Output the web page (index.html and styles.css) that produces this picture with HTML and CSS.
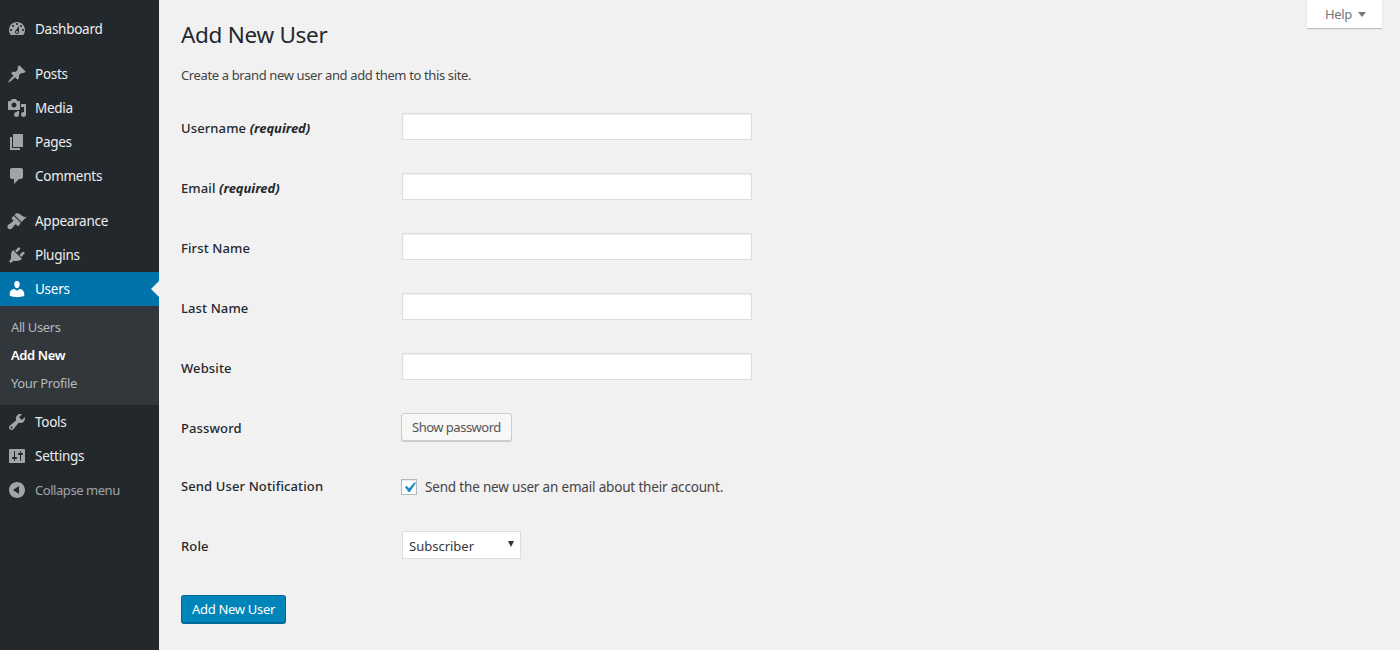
FILE: index.html
```html
<!DOCTYPE html>
<html lang="en">
<head>
<meta charset="utf-8">
<title>Add New User</title>
<link rel="stylesheet" href="styles.css">
</head>
<body>
<div class="app">
<nav class="sidebar">
  <ul class="menu group-first">
    <li class="item"><svg class="icon" viewBox="0 0 20 20"><path d="M3.76 16h12.48c1.1-1.37 1.76-3.11 1.76-5 0-4.42-3.58-8-8-8s-8 3.58-8 8c0 1.89.66 3.63 1.76 5zM10 4c.55 0 1 .45 1 1s-.45 1-1 1-1-.45-1-1 .45-1 1-1zM6 6c.55 0 1 .45 1 1s-.45 1-1 1-1-.45-1-1 .45-1 1-1zm8 0c.55 0 1 .45 1 1s-.45 1-1 1-1-.45-1-1 .45-1 1-1zm-5.37 5.55L12 7v6c0 1.1-.9 2-2 2s-2-.9-2-2c0-.57.24-1.08.63-1.45zM4 10c.55 0 1 .45 1 1s-.45 1-1 1-1-.45-1-1 .45-1 1-1zm12 0c.55 0 1 .45 1 1s-.45 1-1 1-1-.45-1-1 .45-1 1-1zm-5 3c0-.55-.45-1-1-1s-1 .45-1 1 .45 1 1 1 1-.45 1-1z" fill-rule="evenodd"/></svg><span>Dashboard</span></li>
  </ul>
  <ul class="menu">
    <li class="item"><svg class="icon" viewBox="0 0 20 20"><path d="M10.44 3.02l1.82-1.82 6.36 6.35-1.83 1.82c-1.05-.68-2.48-.57-3.41.36l-.75.75c-.92.93-1.04 2.35-.35 3.41l-1.83 1.82-2.41-2.41-2.8 2.79c-.42.42-3.38 2.71-3.8 2.29s1.86-3.39 2.28-3.81l2.79-2.79L4.1 9.36l1.83-1.82c1.05.69 2.48.57 3.4-.36l.75-.75c.93-.92 1.05-2.35.36-3.41z"/></svg><span>Posts</span></li>
    <li class="item"><svg class="icon" viewBox="0 0 20 20"><path d="M13 11V4c0-.55-.45-1-1-1h-1.67L9 1H5L3.67 3H2c-.55 0-1 .45-1 1v7c0 .55.45 1 1 1h10c.55 0 1-.45 1-1zM7 4.5c1.38 0 2.5 1.12 2.5 2.5S8.38 9.5 7 9.5 4.5 8.38 4.5 7 5.62 4.5 7 4.5zM14 6h5v10.5c0 1.38-1.12 2.5-2.5 2.5S14 17.88 14 16.5s1.12-2.5 2.5-2.5c.17 0 .34.02.5.05V9h-3V6zm-4 8.05V13h2v3.5c0 1.38-1.12 2.5-2.5 2.5S7 17.88 7 16.5 8.12 14 9.5 14c.17 0 .34.02.5.05z" fill-rule="evenodd"/></svg><span>Media</span></li>
    <li class="item"><svg class="icon" viewBox="0 0 20 20"><path d="M6 15V2h10v13H6zm-1 1h8v2H3V5h2v11z"/></svg><span>Pages</span></li>
    <li class="item"><svg class="icon" viewBox="0 0 20 20"><path d="M5 2h9c1.1 0 2 .9 2 2v7c0 1.1-.9 2-2 2h-2l-5 5v-5H5c-1.1 0-2-.9-2-2V4c0-1.1.9-2 2-2z"/></svg><span>Comments</span></li>
  </ul>
  <ul class="menu">
    <li class="item"><svg class="icon" viewBox="0 0 20 20"><path d="M14.48 11.06L7.41 3.99l1.5-1.5c.5-.56 2.3-.47 3.51.32 1.21.8 1.43 1.28 2.91 2.1 1.18.64 2.45 1.26 4.45.85zm-.71.71L6.7 4.7 4.93 6.47c-.39.39-.39 1.02 0 1.41l1.06 1.06c.39.39.39 1.03 0 1.42-.6.6-1.43 1.11-2.21 1.69-.35.26-.7.53-1.01.84C1.43 13.23.4 14.22.4 15.69c0 1.47 1.15 2.53 2.65 2.53 1.46 0 2.31-1.07 3.17-2.29.58-.78 1.09-1.61 1.69-2.21.39-.39 1.02-.39 1.41 0l1.06 1.06c.39.39 1.03.39 1.42 0z"/></svg><span>Appearance</span></li>
    <li class="item"><svg class="icon" viewBox="0 0 20 20"><path d="M13.11 4.36L9.87 7.6 8 5.73l3.24-3.24c.35-.34 1.05-.2 1.56.32.52.51.66 1.21.31 1.55zm-8 1.77l.91-1.12 9.01 9.01-1.19.84c-.71.71-2.63 1.16-3.82 1.16H6.14L4.9 17.26c-.59.59-1.54.59-2.12 0-.59-.58-.59-1.53 0-2.12l1.24-1.24v-3.88c0-1.13.4-3.19 1.09-3.89zm7.26 3.97l3.24-3.24c.34-.35 1.04-.21 1.55.31.52.51.66 1.21.31 1.55l-3.24 3.25z"/></svg><span>Plugins</span></li>
    <li class="item item-current"><svg class="icon" viewBox="0 0 20 20"><path d="M10 9.25c-2.27 0-2.73-3.44-2.73-3.44C7 4.02 7.82 2 9.97 2c2.16 0 2.98 2.02 2.71 3.81 0 0-.41 3.44-2.68 3.44zm0 2.57L12.72 10c2.39 0 4.52 2.33 4.52 4.53v2.49s-3.65 1.13-7.24 1.13c-3.65 0-7.24-1.13-7.24-1.13v-2.49c0-2.25 1.94-4.48 4.47-4.48z"/></svg><span>Users</span></li>
    <li>
      <ul class="submenu">
        <li>All Users</li>
        <li class="sub-current">Add New</li>
        <li>Your Profile</li>
      </ul>
    </li>
    <li class="item"><svg class="icon" viewBox="0 0 20 20"><path d="M16.68 9.77c-1.34 1.34-3.3 1.67-4.95.99l-5.41 6.52c-.99.99-2.59.99-3.58 0s-.99-2.59 0-3.57l6.52-5.42c-.68-1.65-.35-3.61.99-4.95 1.28-1.28 3.12-1.62 4.72-1.06l-2.89 2.89 2.82 2.82 2.86-2.87c.53 1.58.18 3.39-1.08 4.65zM3.81 16.21c.4.39 1.04.39 1.43 0 .4-.4.4-1.04 0-1.43-.39-.4-1.03-.4-1.43 0-.39.39-.39 1.03 0 1.43z" fill-rule="evenodd"/></svg><span>Tools</span></li>
    <li class="item"><svg class="icon" viewBox="0 0 20 20"><path d="M18 16V4c0-.55-.45-1-1-1H3c-.55 0-1 .45-1 1v12c0 .55.45 1 1 1h14c.55 0 1-.45 1-1zM8 11h1c.55 0 1 .45 1 1s-.45 1-1 1H8v1.5c0 .28-.22.5-.5.5s-.5-.22-.5-.5V13H6c-.55 0-1-.45-1-1s.45-1 1-1h1V5.5c0-.28.22-.5.5-.5s.5.22.5.5V11zm5-2h-1c-.55 0-1-.45-1-1s.45-1 1-1h1V5.5c0-.28.22-.5.5-.5s.5.22.5.5V7h1c.55 0 1 .45 1 1s-.45 1-1 1h-1v5.5c0 .28-.22.5-.5.5s-.5-.22-.5-.5V9z" fill-rule="evenodd"/></svg><span>Settings</span></li>
    <li class="item item-collapse"><svg class="icon" viewBox="0 0 20 20"><path d="M10 2c4.42 0 8 3.58 8 8s-3.58 8-8 8-8-3.58-8-8 3.58-8 8-8zm2 4l-6 4 6 4V6z" fill-rule="evenodd"/></svg><span>Collapse menu</span></li>
  </ul>
</nav>
<main class="content">
  <div class="help-tab">Help <span class="help-arrow"></span></div>
  <h1 class="title">Add New User</h1>
  <p class="intro">Create a brand new user and add them to this site.</p>
  <form class="form">
    <div class="row"><label class="label">Username <em>(required)</em></label><input class="text-input" type="text"></div>
    <div class="row"><label class="label">Email <em>(required)</em></label><input class="text-input" type="text"></div>
    <div class="row"><label class="label">First Name</label><input class="text-input" type="text"></div>
    <div class="row"><label class="label">Last Name</label><input class="text-input" type="text"></div>
    <div class="row"><label class="label">Website</label><input class="text-input" type="text"></div>
    <div class="row"><label class="label">Password</label><div class="button-secondary">Show password</div></div>
    <div class="row"><label class="label label-tight">Send User Notification</label>
      <div class="check-line"><span class="checkbox"><svg class="check-mark" viewBox="0 0 20 20"><path d="M14.83 4.89l1.34.94-5.81 8.38H9.02L5.78 9.67l1.34-1.25 2.57 2.4z"/></svg></span><span>Send the new user an email about their account.</span></div>
    </div>
    <div class="row"><label class="label label-tight">Role</label><div class="select"><span>Subscriber</span><span class="select-arrow"></span></div></div>
    <div class="submit-wrap"><div class="button-primary">Add New User</div></div>
  </form>
</main>
</div>
</body>
</html>
```
FILE: styles.css
```css
* { box-sizing: border-box; }
html, body { margin: 0; padding: 0; height: 650px; overflow: hidden; }
body { background: #f1f1f1; color: #444; font-family: "Noto Sans", "Open Sans", sans-serif; font-size: 13px; letter-spacing: -0.37px; }
ul { list-style: none; margin: 0; padding: 0; }
.app { display: flex; height: 650px; }
.sidebar { width: 159px; flex: none; background: #23282d; padding-top: 12px; color: #eee; font-size: 13.5px; letter-spacing: -0.27px; }
.menu { margin-bottom: 11px; }
.item { height: 34px; display: flex; align-items: center; padding-left: 7px; gap: 8px; position: relative; }
.icon { width: 20px; height: 20px; fill: #a0a5aa; flex: none; }
.item-current { background: #0073aa; color: #fff; }
.item-current .icon { fill: #fff; }
.item-current::after { content: ""; position: absolute; right: 0; top: 9px; border: 8px solid transparent; border-right-color: #f1f1f1; border-left: 0; }
.item-collapse { color: #a0a5aa; font-size: 13px; letter-spacing: -0.45px; }
.submenu { background: #32373c; padding: 7px 0 8px; font-size: 13px; letter-spacing: -0.4px; color: #b4b9be; }
.submenu li { height: 28px; line-height: 28px; padding-left: 11px; }
.sub-current { color: #fff; font-weight: 600; }
.content { flex: 1; padding: 0 0 0 22px; position: relative; }
.help-tab { position: absolute; top: 0; right: 18px; width: 75px; height: 28px; background: #fff; box-shadow: 0 1px 1px rgba(0,0,0,.2); color: #72777c; font-size: 13px; line-height: 28px; padding-left: 18px; }
.help-arrow { display: inline-block; margin-left: 3px; vertical-align: 2px; border: 4px solid transparent; border-top: 5px solid #72777c; border-bottom: 0; }
.title { margin: 0; font-size: 22.5px; letter-spacing: -0.3px; font-weight: 400; color: #23282d; line-height: 29px; padding-top: 20px; height: 49px; }
.intro { margin: 0; padding-top: 17px; height: 47px; line-height: 19px; }
.form { display: flex; flex-direction: column; }
.row { display: flex; align-items: center; height: 60px; }
.label { width: 221px; flex: none; font-weight: 500; color: #23282d; font-size: 13px; letter-spacing: 0.12px; padding-top: 3px; }
.label-tight { padding-top: 0; }
.label em { font-weight: 700; font-style: italic; font-size: 13px; letter-spacing: -0.05px; }
.text-input { width: 350px; height: 27px; margin: 0; padding: 3px 5px; background: #fff; border: 1px solid #ddd; box-shadow: inset 0 1px 2px rgba(0,0,0,.07); border-radius: 0; }
.button-secondary { height: 28px; line-height: 26px; margin: 1px 0 0 -1px; padding: 0 10px; background: #f7f7f7; border: 1px solid #ccc; border-radius: 3px; box-shadow: 0 1px 0 #ccc; color: #555; white-space: nowrap; letter-spacing: -0.5px; }
.check-line { display: flex; align-items: center; gap: 8px; margin: 2px 0 0 -1px; color: #444; font-size: 13.5px; letter-spacing: -0.18px; }
.checkbox { width: 16px; height: 16px; background: #fff; border: 1px solid #b4b9be; box-shadow: inset 0 1px 2px rgba(0,0,0,.1); display: flex; }
.check-mark { width: 21px; height: 21px; margin: -3px; fill: #1e8cbe; flex: none; }
.select { width: 119px; height: 28px; margin-top: -2px; background: #fff; border: 1px solid #ddd; display: flex; align-items: center; justify-content: space-between; padding: 1px 6px 0; color: #32373c; font-size: 13px; letter-spacing: 0; }
.select-arrow { border: 3.5px solid transparent; border-top: 6px solid #333; border-bottom: 0; margin-top: -4px; }
.submit-wrap { padding-top: 19px; }
.button-primary { display: inline-block; height: 29px; line-height: 27px; padding: 0 10px; background: #0085ba; border: 1px solid #006799; border-bottom-width: 2px; border-radius: 3px; color: #fff; white-space: nowrap; letter-spacing: -0.3px; }
```
